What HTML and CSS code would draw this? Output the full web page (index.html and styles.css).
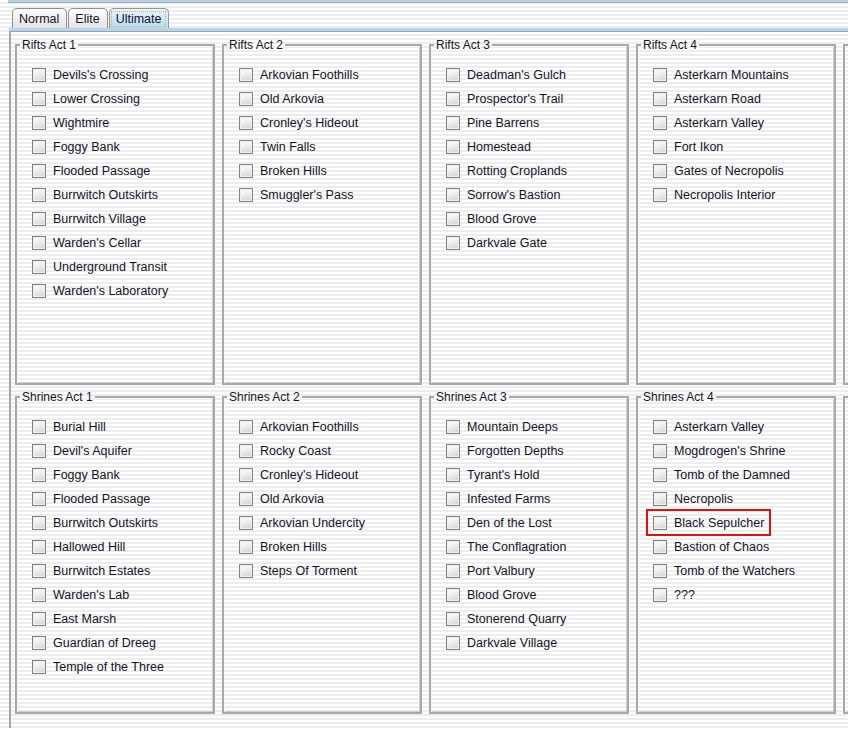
FILE: index.html
```html
<!DOCTYPE html>
<html>
<head>
<meta charset="utf-8">
<link rel="stylesheet" href="styles.css">
</head>
<body>
<div class="topline"></div>
<div class="tabs">
  <div class="tab">Normal</div>
  <div class="tab">Elite</div>
  <div class="tab active"><span class="focus">Ultimate</span></div>
</div>
<div class="band"></div>
<div class="content">
  <div class="grid">
    <fieldset class="panel">
      <legend>Rifts Act 1</legend>
      <ul class="list">
        <li class="item"><span class="box"></span>Devils's Crossing</li>
        <li class="item"><span class="box"></span>Lower Crossing</li>
        <li class="item"><span class="box"></span>Wightmire</li>
        <li class="item"><span class="box"></span>Foggy Bank</li>
        <li class="item"><span class="box"></span>Flooded Passage</li>
        <li class="item"><span class="box"></span>Burrwitch Outskirts</li>
        <li class="item"><span class="box"></span>Burrwitch Village</li>
        <li class="item"><span class="box"></span>Warden's Cellar</li>
        <li class="item"><span class="box"></span>Underground Transit</li>
        <li class="item"><span class="box"></span>Warden's Laboratory</li>
      </ul>
    </fieldset>
    <fieldset class="panel">
      <legend>Rifts Act 2</legend>
      <ul class="list">
        <li class="item"><span class="box"></span>Arkovian Foothills</li>
        <li class="item"><span class="box"></span>Old Arkovia</li>
        <li class="item"><span class="box"></span>Cronley's Hideout</li>
        <li class="item"><span class="box"></span>Twin Falls</li>
        <li class="item"><span class="box"></span>Broken Hills</li>
        <li class="item"><span class="box"></span>Smuggler's Pass</li>
      </ul>
    </fieldset>
    <fieldset class="panel">
      <legend>Rifts Act 3</legend>
      <ul class="list">
        <li class="item"><span class="box"></span>Deadman's Gulch</li>
        <li class="item"><span class="box"></span>Prospector's Trail</li>
        <li class="item"><span class="box"></span>Pine Barrens</li>
        <li class="item"><span class="box"></span>Homestead</li>
        <li class="item"><span class="box"></span>Rotting Croplands</li>
        <li class="item"><span class="box"></span>Sorrow's Bastion</li>
        <li class="item"><span class="box"></span>Blood Grove</li>
        <li class="item"><span class="box"></span>Darkvale Gate</li>
      </ul>
    </fieldset>
    <fieldset class="panel">
      <legend>Rifts Act 4</legend>
      <ul class="list">
        <li class="item"><span class="box"></span>Asterkarn Mountains</li>
        <li class="item"><span class="box"></span>Asterkarn Road</li>
        <li class="item"><span class="box"></span>Asterkarn Valley</li>
        <li class="item"><span class="box"></span>Fort Ikon</li>
        <li class="item"><span class="box"></span>Gates of Necropolis</li>
        <li class="item"><span class="box"></span>Necropolis Interior</li>
      </ul>
    </fieldset>
    <fieldset class="panel">
      <legend>&nbsp;</legend>
    </fieldset>

    <fieldset class="panel">
      <legend>Shrines Act 1</legend>
      <ul class="list">
        <li class="item"><span class="box"></span>Burial Hill</li>
        <li class="item"><span class="box"></span>Devil's Aquifer</li>
        <li class="item"><span class="box"></span>Foggy Bank</li>
        <li class="item"><span class="box"></span>Flooded Passage</li>
        <li class="item"><span class="box"></span>Burrwitch Outskirts</li>
        <li class="item"><span class="box"></span>Hallowed Hill</li>
        <li class="item"><span class="box"></span>Burrwitch Estates</li>
        <li class="item"><span class="box"></span>Warden's Lab</li>
        <li class="item"><span class="box"></span>East Marsh</li>
        <li class="item"><span class="box"></span>Guardian of Dreeg</li>
        <li class="item"><span class="box"></span>Temple of the Three</li>
      </ul>
    </fieldset>
    <fieldset class="panel">
      <legend>Shrines Act 2</legend>
      <ul class="list">
        <li class="item"><span class="box"></span>Arkovian Foothills</li>
        <li class="item"><span class="box"></span>Rocky Coast</li>
        <li class="item"><span class="box"></span>Cronley's Hideout</li>
        <li class="item"><span class="box"></span>Old Arkovia</li>
        <li class="item"><span class="box"></span>Arkovian Undercity</li>
        <li class="item"><span class="box"></span>Broken Hills</li>
        <li class="item"><span class="box"></span>Steps Of Torment</li>
      </ul>
    </fieldset>
    <fieldset class="panel">
      <legend>Shrines Act 3</legend>
      <ul class="list">
        <li class="item"><span class="box"></span>Mountain Deeps</li>
        <li class="item"><span class="box"></span>Forgotten Depths</li>
        <li class="item"><span class="box"></span>Tyrant's Hold</li>
        <li class="item"><span class="box"></span>Infested Farms</li>
        <li class="item"><span class="box"></span>Den of the Lost</li>
        <li class="item"><span class="box"></span>The Conflagration</li>
        <li class="item"><span class="box"></span>Port Valbury</li>
        <li class="item"><span class="box"></span>Blood Grove</li>
        <li class="item"><span class="box"></span>Stonerend Quarry</li>
        <li class="item"><span class="box"></span>Darkvale Village</li>
      </ul>
    </fieldset>
    <fieldset class="panel">
      <legend>Shrines Act 4</legend>
      <ul class="list">
        <li class="item"><span class="box"></span>Asterkarn Valley</li>
        <li class="item"><span class="box"></span>Mogdrogen's Shrine</li>
        <li class="item"><span class="box"></span>Tomb of the Damned</li>
        <li class="item"><span class="box"></span>Necropolis</li>
        <li class="item"><span class="mark"><span class="box"></span>Black Sepulcher</span></li>
        <li class="item"><span class="box"></span>Bastion of Chaos</li>
        <li class="item"><span class="box"></span>Tomb of the Watchers</li>
        <li class="item"><span class="box"></span>???</li>
      </ul>
    </fieldset>
    <fieldset class="panel">
      <legend>&nbsp;</legend>
    </fieldset>
  </div>
</div>
</body>
</html>
```
FILE: styles.css
```css
html, body {
  margin: 0;
  padding: 0;
}
body {
  width: 848px;
  height: 729px;
  overflow: hidden;
  font-family: "Liberation Sans", Arial, sans-serif;
  font-size: 12.5px;
  color: #141428;
  background: repeating-linear-gradient(to bottom, #ffffff 0 2px, #ededed 2px 4px);
}
.topline {
  margin-left: 8px;
  height: 2px;
  background: #bccfe2;
  border-bottom: 1px solid #9eb2c6;
}
.tabs {
  display: flex;
  align-items: flex-end;
  gap: 1px;
  padding-left: 12px;
  margin-top: 5px;
  height: 20px;
}
.tab {
  box-sizing: border-box;
  height: 20px;
  padding: 0 7px 0 6px;
  line-height: 20px;
  border: 1px solid #8f8f8f;
  border-bottom: none;
  border-radius: 5px 5px 0 0;
  background: linear-gradient(#fdfdfd, #e3e3e3);
  color: #141428;
}
.tab.active {
  padding: 0 3px 0 2px;
  border-color: #8d9aa6;
  background: linear-gradient(#e8f4fd, #b6dbf6);
}
.focus {
  display: inline-block;
  line-height: 14px;
  padding: 0 4px;
  outline: 1px dotted #d8b830;
}
.band {
  margin-left: 9px;
  height: 3px;
  background: #b4d5f1;
}
.content {
  box-sizing: border-box;
  height: 697px;
  margin-left: 9px;
  border-left: 2px solid #a6a6a6;
  border-top: 1px solid #a2a2a2;
  padding: 6px 0 0 4px;
  overflow: hidden;
}
.grid {
  display: grid;
  grid-template-columns: repeat(5, 200px);
  grid-template-rows: 347px 324px;
  column-gap: 7px;
  row-gap: 5px;
  width: max-content;
}
.panel {
  margin: 0;
  padding: 0;
  min-width: 0;
  border: 2px solid #a8a8a8;
  box-shadow: inset 1px 1px 0 #f6f6f6, inset -1px -1px 0 #cfcfcf;
}
.panel legend {
  margin-left: 3px;
  padding: 0 2px;
  line-height: 14px;
  font-size: 12px;
  color: #141428;
}
.list {
  list-style: none;
  margin: 0;
  padding: 11px 0 0 15px;
}
.item {
  height: 24px;
  display: flex;
  align-items: center;
  gap: 7px;
  white-space: nowrap;
}
.box {
  flex: none;
  box-sizing: border-box;
  width: 14px;
  height: 14px;
  border: 1px solid #828282;
  background: linear-gradient(160deg, #ffffff 0%, #eeeeee 45%, #d2d2d2 100%);
  box-shadow: inset 0 0 0 1px #f0f0f0;
}
.mark {
  position: relative;
  display: flex;
  align-items: center;
  gap: 7px;
  height: 24px;
}
.mark::after {
  content: "";
  position: absolute;
  left: -7px;
  right: -7px;
  top: -2px;
  bottom: -1px;
  border: 2px solid #e41010;
}
```
